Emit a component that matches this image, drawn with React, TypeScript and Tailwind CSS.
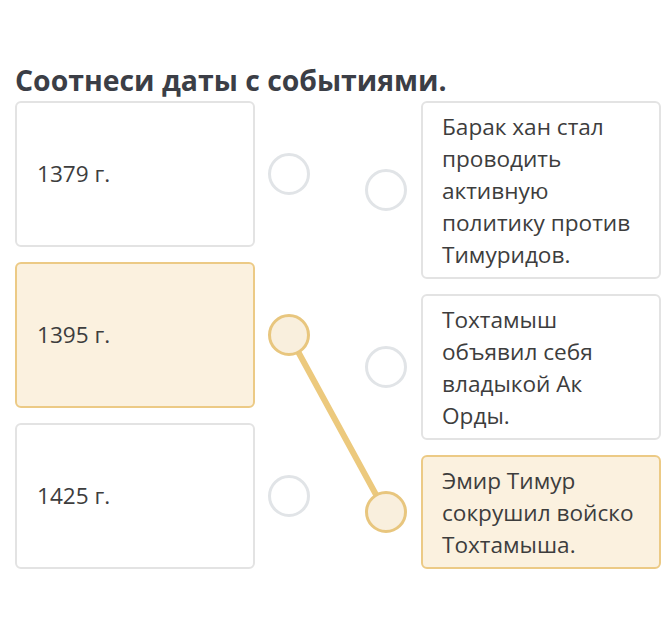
import React from "react";

const leftItems = [
  { text: "1379 г.", active: false },
  { text: "1395 г.", active: true },
  { text: "1425 г.", active: false },
];

const rightItems = [
  { lines: ["Барак хан стал", "проводить", "активную", "политику против", "Тимуридов."], active: false, h: "h-[178px]" },
  { lines: ["Тохтамыш", "объявил себя", "владыкой Ак", "Орды."], active: false, h: "h-[146px]" },
  { lines: ["Эмир Тимур", "сокрушил войско", "Тохтамыша."], active: true, h: "h-[114px]" },
];

function Dot({ active }: { active: boolean }) {
  return (
    <div
      className={
        "relative z-10 w-[42px] h-[42px] shrink-0 rounded-full border-[3px] " +
        (active ? "bg-[#f9efdd] border-[#e8c67e]" : "bg-white border-[#e1e4e7]")
      }
    />
  );
}

export default function App() {
  return (
    <div
      className="w-[661px] h-[623px] bg-white text-[#3d3d3d] overflow-hidden"
      style={{ fontFamily: '"Open Sans", "Noto Sans", sans-serif' }}
    >
      <h1 className="pt-[62px] pl-[15px] mb-[3px] text-[28.4px] leading-[36px] font-bold text-[#3b3e46] whitespace-nowrap">
        Соотнеси даты с событиями.
      </h1>
      <div className="relative flex pl-[15px]">
        <svg
          className="absolute left-0 top-0 z-0 pointer-events-none"
          width="661"
          height="470"
        >
          <line x1="289" y1="234" x2="386" y2="412" stroke="#ecc97d" strokeWidth="6" strokeLinecap="round" />
        </svg>
        <div className="flex flex-col gap-[15px]">
          {leftItems.map((it) => (
            <div key={it.text} className="flex items-center">
              <div
                className={
                  "w-[240px] h-[146px] rounded-[6px] border-2 flex items-center pl-[20px] text-[22.6px] leading-[32px] " +
                  (it.active ? "bg-[#fbf1df] border-[#ecca85]" : "bg-white border-[#e3e3e3]")
                }
              >
                {it.text}
              </div>
              <div className="ml-[13px]">
                <Dot active={it.active} />
              </div>
            </div>
          ))}
        </div>
        <div className="w-[55px] shrink-0" />
        <div className="flex flex-col gap-[15px]">
          {rightItems.map((it, i) => (
            <div key={i} className="flex items-center">
              <Dot active={it.active} />
              <div
                className={
                  "ml-[14px] w-[240px] rounded-[6px] border-2 pl-[19px] pt-[8px] text-[22.6px] leading-[32px] " +
                  it.h +
                  " " +
                  (it.active ? "bg-[#fbf1df] border-[#ecca85]" : "bg-white border-[#e3e3e3]")
                }
              >
                {it.lines.map((l) => (
                  <div key={l} className="whitespace-nowrap">{l}</div>
                ))}
              </div>
            </div>
          ))}
        </div>
      </div>
    </div>
  );
}
